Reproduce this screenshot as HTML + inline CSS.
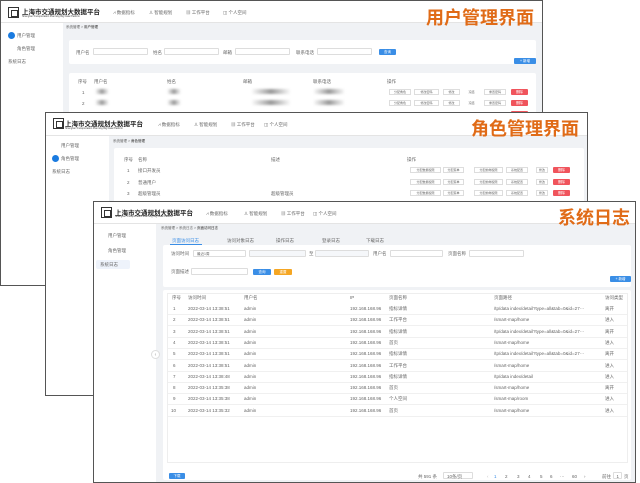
<!DOCTYPE html>
<html><head><meta charset="utf-8"><style>
*{margin:0;padding:0;box-sizing:border-box}
body{width:640px;height:483px;background:#fff;position:relative;overflow:hidden;font-family:"Liberation Sans","Noto Sans CJK SC",sans-serif;color:#555}
.a{position:absolute;white-space:nowrap}
.win{position:absolute;background:#f0f2f5;border:1.5px solid #555;overflow:hidden}
.hd{position:absolute;left:0;top:0;right:0;background:#fff;border-bottom:1px solid #e4e4e4}
.side{position:absolute;left:0;bottom:0;background:#fff}
.card{position:absolute;background:#fff;border-radius:2px}
.t{font-size:4.5px;color:#666}
.logo{position:absolute;width:11px;height:11px;border:1px solid #333}
.logo:after{content:"";position:absolute;left:2px;top:2px;width:5px;height:5px;border:1px solid #333}
.ttl{font-size:6.5px;color:#222;font-weight:bold}
.sub{font-size:2.5px;color:#444}
.big{font-weight:bold;color:#e06b17;font-size:18px;line-height:20px;font-family:"Noto Sans CJK SC",sans-serif}
.inp{position:absolute;height:7px;border:1px solid #ddd;background:#fff;border-radius:1px}
.btn{position:absolute;height:6px;border-radius:1px;font-size:3.5px;color:#fff;text-align:center;line-height:6px}
.ob{position:absolute;height:6px;border:1px solid #ddd;background:#fff;font-size:3px;color:#666;text-align:center;line-height:5px}
.blue{background:#3a8ee6}.red{background:#f0545c}.org{background:#f5a623}
.blur{position:absolute;height:5px;background:linear-gradient(90deg,#fff,#999 50%,#fff);filter:blur(1px)}
.dot{position:absolute;width:7px;height:7px;border-radius:50%;background:#1a7be0}
</style></head><body>

<!-- Window 1 -->
<div class="win" style="left:0;top:0;width:543px;height:286px">
 <div class="hd" style="height:22px">
  <div class="logo" style="left:7px;top:6px"></div>
  <div class="a ttl" style="left:21px;top:5px">上海市交通规划大数据平台</div>
  <div class="a sub" style="left:21px;top:14px">Shanghai Transportation Planning Big Data Platform</div>
  <div class="a t" style="left:112px;top:9px">⩘ 数据指标</div>
  <div class="a t" style="left:148px;top:9px">♙ 智能规划</div>
  <div class="a t" style="left:185px;top:9px">▦ 工作平台</div>
  <div class="a t" style="left:222px;top:9px">◫ 个人空间</div>
  <div class="a big" style="left:425px;top:6px">用户管理界面</div>
 </div>
 <div class="side" style="top:22px;width:62px"></div>
 <div class="dot" style="left:7px;top:31px"></div>
 <div class="a t" style="left:16px;top:32px">用户管理</div>
 <div class="a t" style="left:16px;top:45px">角色管理</div>
 <div class="a t" style="left:7px;top:58px">系统日志</div>
 <div class="a t" style="left:65px;top:24px;font-size:3.5px">系统管理 &gt; <b>用户管理</b></div>
 <div class="card" style="left:68px;top:39px;width:467px;height:24px"></div>
 <div class="a t" style="left:75px;top:49px">用户名</div><div class="inp" style="left:92px;top:47px;width:55px"></div>
 <div class="a t" style="left:152px;top:49px">姓名</div><div class="inp" style="left:163px;top:47px;width:55px"></div>
 <div class="a t" style="left:222px;top:49px">邮箱</div><div class="inp" style="left:234px;top:47px;width:55px"></div>
 <div class="a t" style="left:295px;top:49px">联系电话</div><div class="inp" style="left:316px;top:47px;width:55px"></div>
 <div class="btn blue" style="left:378px;top:48px;width:17px">查询</div>
 <div class="btn blue" style="left:513px;top:57px;width:22px">+ 新增</div>
 <div class="card" style="left:68px;top:72px;width:467px;height:214px"></div>
 <div class="a t" style="left:77px;top:78px">序号</div><div class="a t" style="left:93px;top:78px">用户名</div>
 <div class="a t" style="left:166px;top:78px">姓名</div><div class="a t" style="left:242px;top:78px">邮箱</div>
 <div class="a t" style="left:312px;top:78px">联系电话</div><div class="a t" style="left:386px;top:78px">操作</div>
 <div class="a t" style="left:81px;top:89px">1</div><div class="a t" style="left:81px;top:100px">2</div>
 <div class="blur" style="left:94px;top:88px;width:14px"></div><div class="blur" style="left:94px;top:99px;width:14px"></div>
 <div class="blur" style="left:166px;top:88px;width:14px"></div><div class="blur" style="left:166px;top:99px;width:14px"></div>
 <div class="blur" style="left:250px;top:88px;width:40px"></div><div class="blur" style="left:250px;top:99px;width:40px"></div>
 <div class="blur" style="left:312px;top:88px;width:32px"></div><div class="blur" style="left:312px;top:99px;width:32px"></div>
 <div class="ob" style="left:388px;top:88px;width:22px">分配角色</div><div class="ob" style="left:413px;top:88px;width:25px">修改密码</div><div class="ob" style="left:442px;top:88px;width:17px">修改</div><div class="ob" style="left:463px;top:88px;width:15px;border-color:#fff">冻结</div><div class="ob" style="left:483px;top:88px;width:22px">重置密码</div><div class="btn red" style="left:510px;top:88px;width:17px">删除</div>
 <div class="ob" style="left:388px;top:99px;width:22px">分配角色</div><div class="ob" style="left:413px;top:99px;width:25px">修改密码</div><div class="ob" style="left:442px;top:99px;width:17px">修改</div><div class="ob" style="left:463px;top:99px;width:15px;border-color:#fff">冻结</div><div class="ob" style="left:483px;top:99px;width:22px">重置密码</div><div class="btn red" style="left:510px;top:99px;width:17px">删除</div>
 <div class="btn red" style="left:510px;top:110px;width:17px"></div>
</div>

<!-- Window 2 -->
<div class="win" style="left:45px;top:112px;width:543px;height:284px">
 <div class="hd" style="height:23px">
  <div class="logo" style="left:7px;top:5px"></div>
  <div class="a ttl" style="left:19px;top:5px">上海市交通规划大数据平台</div>
  <div class="a sub" style="left:19px;top:14px">Shanghai Transportation Planning Big Data Platform</div>
  <div class="a t" style="left:112px;top:9px">⩘ 数据指标</div>
  <div class="a t" style="left:148px;top:9px">♙ 智能规划</div>
  <div class="a t" style="left:185px;top:9px">▦ 工作平台</div>
  <div class="a t" style="left:218px;top:9px">◫ 个人空间</div>
  <div class="a big" style="left:425px;top:5px">角色管理界面</div>
 </div>
 <div class="side" style="top:23px;width:63px"></div>
 <div class="a t" style="left:15px;top:30px">用户管理</div>
 <div class="dot" style="left:6px;top:42px"></div>
 <div class="a t" style="left:15px;top:43px">角色管理</div>
 <div class="a t" style="left:6px;top:56px">系统日志</div>
 <div class="a t" style="left:67px;top:26px;font-size:3.5px">系统管理 &gt; <b>角色管理</b></div>
 <div class="card" style="left:68px;top:35px;width:470px;height:246px"></div>
 <div class="a t" style="left:78px;top:44px">序号</div><div class="a t" style="left:92px;top:44px">名称</div>
 <div class="a t" style="left:225px;top:44px">描述</div><div class="a t" style="left:361px;top:44px">操作</div>
 <div class="a t" style="left:81px;top:55px">1</div><div class="a t" style="left:92px;top:55px">接口开发员</div>
 <div class="a t" style="left:81px;top:67px">2</div><div class="a t" style="left:92px;top:67px">普通用户</div>
 <div class="a t" style="left:81px;top:78px">3</div><div class="a t" style="left:92px;top:78px">超级管理员</div><div class="a t" style="left:225px;top:78px">超级管理员</div>
 <div style="position:absolute;left:0;top:54px">
  <div class="ob" style="left:364px;top:0;width:31px">分配数据权限</div><div class="ob" style="left:397px;top:0;width:21px">分配菜单</div><div class="ob" style="left:428px;top:0;width:29px">分配前端权限</div><div class="ob" style="left:460px;top:0;width:22px">系统配置</div><div class="ob" style="left:490px;top:0;width:12px">修改</div><div class="btn red" style="left:507px;top:0;width:17px">删除</div>
 </div>
 <div style="position:absolute;left:0;top:66px">
  <div class="ob" style="left:364px;top:0;width:31px">分配数据权限</div><div class="ob" style="left:397px;top:0;width:21px">分配菜单</div><div class="ob" style="left:428px;top:0;width:29px">分配前端权限</div><div class="ob" style="left:460px;top:0;width:22px">系统配置</div><div class="ob" style="left:490px;top:0;width:12px">修改</div><div class="btn red" style="left:507px;top:0;width:17px">删除</div>
 </div>
 <div style="position:absolute;left:0;top:77px">
  <div class="ob" style="left:364px;top:0;width:31px">分配数据权限</div><div class="ob" style="left:397px;top:0;width:21px">分配菜单</div><div class="ob" style="left:428px;top:0;width:29px">分配前端权限</div><div class="ob" style="left:460px;top:0;width:22px">系统配置</div><div class="ob" style="left:490px;top:0;width:12px">修改</div><div class="btn red" style="left:507px;top:0;width:17px">删除</div>
 </div>
</div>

<!-- Window 3 -->
<div class="win" style="left:93px;top:201px;width:543px;height:282px">
 <div class="hd" style="height:22px">
  <div class="logo" style="left:7px;top:5px"></div>
  <div class="a ttl" style="left:21px;top:5px">上海市交通规划大数据平台</div>
  <div class="a sub" style="left:21px;top:13px">Shanghai Transportation Planning Big Data Platform</div>
  <div class="a t" style="left:112px;top:9px">⩘ 数据指标</div>
  <div class="a t" style="left:150px;top:9px">♙ 智能规划</div>
  <div class="a t" style="left:187px;top:9px">▦ 工作平台</div>
  <div class="a t" style="left:219px;top:9px">◫ 个人空间</div>
  <div class="a big" style="left:464px;top:5px">系统日志</div>
 </div>
 <div class="side" style="top:22px;width:62px"></div>
 <div class="a t" style="left:14px;top:31px">用户管理</div>
 <div class="a t" style="left:14px;top:46px">角色管理</div>
 <div style="position:absolute;left:2px;top:58px;width:34px;height:9px;background:#eef3fb;border-radius:2px"></div>
 <div class="a t" style="left:6px;top:60px">系统日志</div>
 <div class="a t" style="left:67px;top:24px;font-size:3.5px">系统管理 &gt; 系统日志 &gt; <b>页面访问日志</b></div>
 <div class="a t" style="left:78px;top:36px;color:#3a8ee6">页面访问日志</div>
 <div style="position:absolute;left:76px;top:42px;width:32px;height:1px;background:#3a8ee6"></div>
 <div class="a t" style="left:133px;top:36px">访问对象日志</div>
 <div class="a t" style="left:182px;top:36px">操作日志</div>
 <div class="a t" style="left:228px;top:36px">登录日志</div>
 <div class="a t" style="left:272px;top:36px">下载日志</div>
 <div class="card" style="left:69px;top:43px;width:468px;height:42px"></div>
 <div class="a t" style="left:77px;top:49px">访问时间</div><div class="inp" style="left:99px;top:48px;width:53px"><span class="a t" style="left:3px;top:1px;font-size:3.5px">最近1周</span></div>
 <div class="inp" style="left:155px;top:48px;width:57px;background:#f5f7fa"></div>
 <div class="a t" style="left:215px;top:49px">至</div>
 <div class="inp" style="left:221px;top:48px;width:54px;background:#f5f7fa"></div>
 <div class="a t" style="left:279px;top:49px">用户名</div><div class="inp" style="left:296px;top:48px;width:53px"></div>
 <div class="a t" style="left:354px;top:49px">页面名称</div><div class="inp" style="left:375px;top:48px;width:55px"></div>
 <div class="a t" style="left:77px;top:67px">页面描述</div><div class="inp" style="left:97px;top:66px;width:57px"></div>
 <div class="btn blue" style="left:159px;top:67px;width:18px">查询</div>
 <div class="btn org" style="left:180px;top:67px;width:18px">重置</div>
 <div class="btn blue" style="left:516px;top:74px;width:21px">+ 新增</div>
 <div class="card" style="left:69px;top:88px;width:468px;height:190px"></div>
 <div style="position:absolute;left:73px;top:91px;width:461px;height:170px;border:1px solid #eee"></div>
 <div class="a t" style="left:78px;top:93px">序号</div><div class="a t" style="left:94px;top:93px">访问时间</div>
 <div class="a t" style="left:150px;top:93px">用户名</div><div class="a t" style="left:256px;top:93px">IP</div>
 <div class="a t" style="left:295px;top:93px">页面名称</div><div class="a t" style="left:400px;top:93px">页面路径</div>
 <div class="a t" style="left:511px;top:93px">访问类型</div>
 <div id="rows"></div>
 <div class="a" style="left:57px;top:148px;width:9px;height:9px;border-radius:50%;border:1px solid #ddd;background:#fff;font-size:5px;color:#999;text-align:center;line-height:8px">‹</div>
 <div class="btn blue" style="left:75px;top:271px;width:16px">下载</div>
 <div class="a t" style="left:324px;top:272px">共 591 条</div>
 <div class="inp" style="left:349px;top:270px;width:30px"><span class="a t" style="left:3px;top:0.5px">10条/页</span></div>
 <div class="a t" style="left:393px;top:272px;color:#bbb">‹</div>
 <div class="a t" style="left:400px;top:272px;color:#3a8ee6">1</div>
 <div class="a t" style="left:411px;top:272px">2</div><div class="a t" style="left:423px;top:272px">3</div>
 <div class="a t" style="left:434px;top:272px">4</div><div class="a t" style="left:446px;top:272px">5</div>
 <div class="a t" style="left:456px;top:272px">6</div><div class="a t" style="left:466px;top:272px">···</div>
 <div class="a t" style="left:478px;top:272px">60</div><div class="a t" style="left:490px;top:272px">›</div>
 <div class="a t" style="left:508px;top:272px">前往</div><div class="inp" style="left:519px;top:270px;width:9px"><span class="a t" style="left:2.5px;top:0.5px">1</span></div><div class="a t" style="left:530px;top:272px">页</div>
</div>
<script>
var d=[["13:38:51","指标详情","/tp/data index/detail?type=all&tab=0&id=27···","离开"],["13:38:51","工作平台","/smart-map/home","进入"],["13:38:51","指标详情","/tp/data index/detail?type=all&tab=0&id=27···","离开"],["13:38:51","首页","/smart-map/home","进入"],["13:38:51","指标详情","/tp/data index/detail?type=all&tab=0&id=27···","离开"],["13:38:51","工作平台","/smart-map/home","进入"],["13:38:48","指标详情","/tp/data index/detail","进入"],["13:35:38","首页","/smart-map/home","离开"],["13:35:38","个人空间","/smart-map/room","进入"],["13:35:32","首页","/smart-map/home","进入"]];
var h="";d.forEach(function(r,i){var y=104+i*11.3;
h+='<div class="a t" style="left:'+(i==9?77:79)+'px;top:'+y+'px">'+(i+1)+'</div><div class="a t" style="left:94px;top:'+y+'px">2022-03-14 '+r[0]+'</div><div class="a t" style="left:150px;top:'+y+'px">admin</div><div class="a t" style="left:256px;top:'+y+'px">192.168.168.96</div><div class="a t" style="left:295px;top:'+y+'px">'+r[1]+'</div><div class="a t" style="left:400px;top:'+y+'px">'+r[2]+'</div><div class="a t" style="left:511px;top:'+y+'px">'+r[3]+'</div><div style="position:absolute;left:74px;width:459px;height:1px;background:#f0f0f0;top:'+(y+8)+'px"></div>';});
document.getElementById("rows").outerHTML=h;
</script>
</body></html>
